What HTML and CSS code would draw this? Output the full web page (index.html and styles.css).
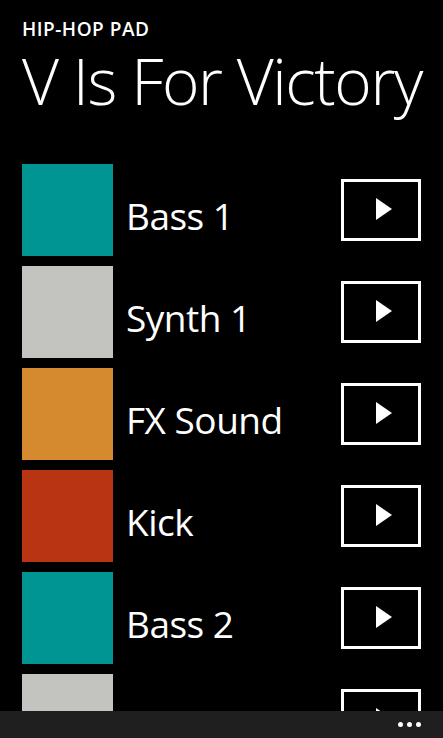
FILE: index.html
```html
<!DOCTYPE html>
<html>
<head>
<meta charset="utf-8">
<link rel="stylesheet" href="styles.css">
</head>
<body>
<div class="page">
  <header class="header">
    <div class="app-name">HIP-HOP PAD</div>
    <h1 class="title">V Is For Victory</h1>
  </header>
  <ul class="pads">
    <li class="pad"><span class="swatch teal"></span><span class="name">Bass 1</span><button class="play"><svg viewBox="0 0 16 22" width="16" height="22"><path d="M0 0 L16 11 L0 22 Z" fill="#fff"/></svg></button></li>
    <li class="pad"><span class="swatch grey"></span><span class="name">Synth 1</span><button class="play"><svg viewBox="0 0 16 22" width="16" height="22"><path d="M0 0 L16 11 L0 22 Z" fill="#fff"/></svg></button></li>
    <li class="pad"><span class="swatch orange"></span><span class="name">FX Sound</span><button class="play"><svg viewBox="0 0 16 22" width="16" height="22"><path d="M0 0 L16 11 L0 22 Z" fill="#fff"/></svg></button></li>
    <li class="pad"><span class="swatch red"></span><span class="name">Kick</span><button class="play"><svg viewBox="0 0 16 22" width="16" height="22"><path d="M0 0 L16 11 L0 22 Z" fill="#fff"/></svg></button></li>
    <li class="pad"><span class="swatch teal"></span><span class="name">Bass 2</span><button class="play"><svg viewBox="0 0 16 22" width="16" height="22"><path d="M0 0 L16 11 L0 22 Z" fill="#fff"/></svg></button></li>
    <li class="pad"><span class="swatch grey"></span><span class="name">Synth 2</span><button class="play"><svg viewBox="0 0 16 22" width="16" height="22"><path d="M0 0 L16 11 L0 22 Z" fill="#fff"/></svg></button></li>
  </ul>
</div>
<div class="appbar">
  <span class="dot"></span><span class="dot"></span><span class="dot"></span>
</div>
</body>
</html>
```
FILE: styles.css
```css
html, body {
  margin: 0;
  padding: 0;
  background: #000;
  color: #fff;
  height: 738px;
  overflow: hidden;
  font-family: "Open Sans", "Noto Sans", sans-serif;
}
.page {
  padding: 0 22px;
}
.header {
  padding-top: 17px;
}
.app-name {
  font-size: 19px;
  font-weight: 600;
  line-height: 24px;
  letter-spacing: 0.5px;
}
.title {
  margin: 2px 0 0;
  font-size: 64px;
  font-weight: 300;
  line-height: 76px;
  letter-spacing: -1.4px;
  white-space: nowrap;
}
.pads {
  list-style: none;
  margin: 0;
  padding: 0;
  margin-top: 45px;
  display: flex;
  flex-direction: column;
  gap: 9.6px;
}
.pad {
  display: flex;
  align-items: center;
  height: 92.4px;
}
.swatch {
  width: 91px;
  height: 92.4px;
  flex: none;
}
.teal { background: #009592; }
.grey { background: #c3c4bf; }
.orange { background: #d58a2f; }
.red { background: #b93413; }
.name {
  flex: 1;
  margin-left: 13px;
  font-size: 37px;
  letter-spacing: -0.5px;
  line-height: 44px;
  padding-top: 12px;
}
.play {
  width: 80px;
  height: 62px;
  border: 3px solid #fff;
  background: transparent;
  padding: 0 0 2px 6px;
  display: flex;
  align-items: center;
  justify-content: center;
  box-sizing: border-box;
}
.play svg { display: block; }
.appbar {
  position: fixed;
  left: 0;
  right: 0;
  bottom: 0;
  height: 27px;
  background: #1f1f1f;
  display: flex;
  justify-content: flex-end;
  align-items: center;
  gap: 4px;
  padding-right: 22px;
}
.dot {
  width: 5px;
  height: 5px;
  border-radius: 50%;
  background: #fff;
}
```
